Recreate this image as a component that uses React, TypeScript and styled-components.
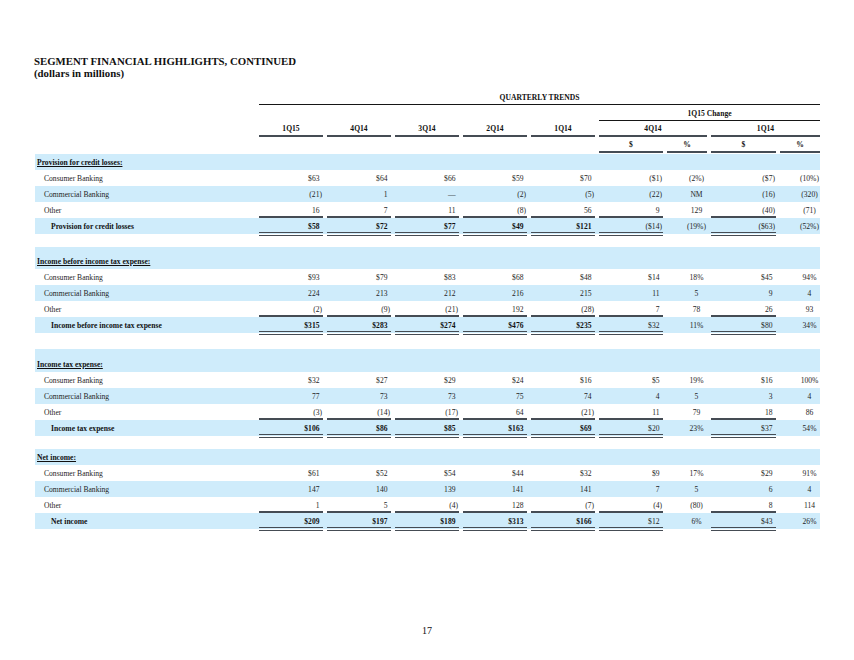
import * as React from "react";
import styled, { createGlobalStyle } from "styled-components";

const BLUE = "#cfecfb";
const RULE = "#454c54";

type Kind = "q" | "d" | "p";

interface Col {
  w: number;
  kind: Kind;
}

// 1Q15 4Q14 3Q14 2Q14 1Q14 | 4Q14 $ % | 1Q14 $ %
const cols: Col[] = [
  { w: 68, kind: "q" },
  { w: 68, kind: "q" },
  { w: 68, kind: "q" },
  { w: 68, kind: "q" },
  { w: 68, kind: "q" },
  { w: 68, kind: "d" },
  { w: 44, kind: "p" },
  { w: 69, kind: "d" },
  { w: 44, kind: "p" },
];

interface Section {
  title: string;
  total: string;
  gapBefore: number;
  headHeight: number;
  rows: { label: string; values: string[] }[];
  totals: string[];
}

const sections: Section[] = [
  {
    title: "Provision for credit losses:",
    total: "Provision for credit losses",
    gapBefore: 0,
    headHeight: 16,
    rows: [
      { label: "Consumer Banking", values: ["$63", "$64", "$66", "$59", "$70", "($1)", "(2%)", "($7)", "(10%)"] },
      { label: "Commercial Banking", values: ["(21)", "1", "—", "(2)", "(5)", "(22)", "NM", "(16)", "(320)"] },
      { label: "Other", values: ["16", "7", "11", "(8)", "56", "9", "129", "(40)", "(71)"] },
    ],
    totals: ["$58", "$72", "$77", "$49", "$121", "($14)", "(19%)", "($63)", "(52%)"],
  },
  {
    title: "Income before income tax expense:",
    total: "Income before income tax expense",
    gapBefore: 13,
    headHeight: 22,
    rows: [
      { label: "Consumer Banking", values: ["$93", "$79", "$83", "$68", "$48", "$14", "18%", "$45", "94%"] },
      { label: "Commercial Banking", values: ["224", "213", "212", "216", "215", "11", "5", "9", "4"] },
      { label: "Other", values: ["(2)", "(9)", "(21)", "192", "(28)", "7", "78", "26", "93"] },
    ],
    totals: ["$315", "$283", "$274", "$476", "$235", "$32", "11%", "$80", "34%"],
  },
  {
    title: "Income tax expense:",
    total: "Income tax expense",
    gapBefore: 16,
    headHeight: 23,
    rows: [
      { label: "Consumer Banking", values: ["$32", "$27", "$29", "$24", "$16", "$5", "19%", "$16", "100%"] },
      { label: "Commercial Banking", values: ["77", "73", "73", "75", "74", "4", "5", "3", "4"] },
      { label: "Other", values: ["(3)", "(14)", "(17)", "64", "(21)", "11", "79", "18", "86"] },
    ],
    totals: ["$106", "$86", "$85", "$163", "$69", "$20", "23%", "$37", "54%"],
  },
  {
    title: "Net income:",
    total: "Net income",
    gapBefore: 13,
    headHeight: 16,
    rows: [
      { label: "Consumer Banking", values: ["$61", "$52", "$54", "$44", "$32", "$9", "17%", "$29", "91%"] },
      { label: "Commercial Banking", values: ["147", "140", "139", "141", "141", "7", "5", "6", "4"] },
      { label: "Other", values: ["1", "5", "(4)", "128", "(7)", "(4)", "(80)", "8", "114"] },
    ],
    totals: ["$209", "$197", "$189", "$313", "$166", "$12", "6%", "$43", "26%"],
  },
];

const GlobalStyle = createGlobalStyle`
  html, body {
    margin: 0;
    padding: 0;
    background: #fff;
  }
  body {
    font-family: "Liberation Serif", "Times New Roman", serif;
    color: #1e1e1e;
  }
`;

const Page = styled.div`
  width: 854px;
  height: 660px;
  box-sizing: border-box;
  padding: 55px 0 0 34px;
`;

const Title = styled.h1`
  margin: 0;
  font-size: 10.8px;
  line-height: 12px;
  font-weight: bold;
  color: #111;
`;

const Table = styled.div`
  margin: 10px 0 0 1px;
  width: 785px;
  font-size: 7.6px;
`;

const HeadRow = styled.div<{ $offset: number }>`
  display: flex;
  height: 16px;
  padding-left: ${(p) => p.$offset}px;
`;

const HeadCell = styled.div<{ $w: number; $thick?: boolean }>`
  width: ${(p) => p.$w - 4}px;
  margin-left: 4px;
  box-sizing: border-box;
  display: flex;
  align-items: flex-end;
  justify-content: center;
  padding-bottom: 1px;
  line-height: 10px;
  font-weight: bold;
  color: #111;
  border-bottom: ${(p) => (p.$thick ? `2px solid ${RULE}` : "1px solid #161616")};
`;

const Body = styled.div`
  margin-top: 1px;
`;

const Gap = styled.div<{ $h: number }>`
  height: ${(p) => p.$h}px;
`;

const Row = styled.div<{ $shade?: boolean; $h?: number }>`
  display: flex;
  align-items: flex-end;
  height: ${(p) => p.$h ?? 16}px;
  background: ${(p) => (p.$shade ? BLUE : "transparent")};
`;

const Label = styled.div<{ $indent: number; $bold?: boolean; $under?: boolean }>`
  width: 220px;
  height: 16px;
  box-sizing: border-box;
  padding-left: ${(p) => p.$indent}px;
  line-height: 18px;
  white-space: nowrap;
  font-weight: ${(p) => (p.$bold ? "bold" : "normal")};
  color: ${(p) => (p.$bold ? "#111" : "#1e1e1e")};
  text-decoration: ${(p) => (p.$under ? "underline" : "none")};
  text-underline-offset: 1px;
`;

const Num = styled.div<{
  $w: number;
  $center?: boolean;
  $bold?: boolean;
  $rule?: boolean;
  $double?: boolean;
}>`
  position: relative;
  width: ${(p) => p.$w - 4}px;
  height: 16px;
  margin-left: 4px;
  box-sizing: border-box;
  padding: ${(p) => (p.$center ? "0 0 0 19px" : "0 1px 0 0")};
  line-height: 18px;
  white-space: nowrap;
  text-align: ${(p) => (p.$center ? "center" : "right")};
  font-weight: ${(p) => (p.$bold ? "bold" : "normal")};
  color: ${(p) => (p.$bold ? "#111" : "#1e1e1e")};
  border-bottom: ${(p) => (p.$rule ? `2px solid ${RULE}` : "none")};

  &::after {
    content: "";
    display: ${(p) => (p.$double ? "block" : "none")};
    position: absolute;
    left: 0;
    right: 0;
    bottom: -2px;
    height: 4px;
    box-sizing: border-box;
    border-top: 1px solid ${RULE};
    border-bottom: 1px solid ${RULE};
  }
`;

const Hang = styled.span`
  visibility: hidden;
`;

const Folio = styled.div`
  width: 854px;
  margin: 96px 0 0 -34px;
  text-align: center;
  font-size: 10px;
  line-height: 12px;
  color: #111;
`;

function Values(props: { values: string[]; total?: boolean; rule?: boolean }) {
  return (
    <>
      {props.values.map((v, i) => {
        const col = cols[i];
        const center = col.kind === "p";
        const lined = col.kind !== "p";
        return (
          <Num
            key={i}
            $w={col.w}
            $center={center}
            $bold={props.total && col.kind === "q"}
            $rule={props.rule && lined}
            $double={props.total && lined}
          >
            {v}
            {!center && !v.endsWith(")") ? <Hang>)</Hang> : null}
          </Num>
        );
      })}
    </>
  );
}

export default function App() {
  return (
    <Page>
      <GlobalStyle />
      <Title>
        SEGMENT FINANCIAL HIGHLIGHTS, CONTINUED
        <br />
        (dollars in millions)
      </Title>
      <Table>
        <HeadRow $offset={220}>
          <HeadCell $w={565}>QUARTERLY TRENDS</HeadCell>
        </HeadRow>
        <HeadRow $offset={560}>
          <HeadCell $w={225}>1Q15 Change</HeadCell>
        </HeadRow>
        <HeadRow $offset={220}>
          {["1Q15", "4Q14", "3Q14", "2Q14", "1Q14"].map((q) => (
            <HeadCell key={q} $w={68} $thick>
              {q}
            </HeadCell>
          ))}
          <HeadCell $w={112} $thick>
            4Q14
          </HeadCell>
          <HeadCell $w={113} $thick>
            1Q14
          </HeadCell>
        </HeadRow>
        <HeadRow $offset={560}>
          {cols.slice(5).map((c, i) => (
            <HeadCell key={i} $w={c.w} $thick>
              {c.kind === "d" ? "$" : "%"}
            </HeadCell>
          ))}
        </HeadRow>
        <Body>
          {sections.map((s) => (
            <React.Fragment key={s.title}>
              {s.gapBefore > 0 && <Gap $h={s.gapBefore} />}
              <Row $shade $h={s.headHeight}>
                <Label $indent={2} $bold $under>
                  {s.title}
                </Label>
              </Row>
              {s.rows.map((r, i) => (
                <Row key={r.label} $shade={i === 1}>
                  <Label $indent={9}>{r.label}</Label>
                  <Values values={r.values} rule={i === 2} />
                </Row>
              ))}
              <Row $shade>
                <Label $indent={16} $bold>
                  {s.total}
                </Label>
                <Values values={s.totals} total />
              </Row>
            </React.Fragment>
          ))}
        </Body>
      </Table>
      <Folio>17</Folio>
    </Page>
  );
}
